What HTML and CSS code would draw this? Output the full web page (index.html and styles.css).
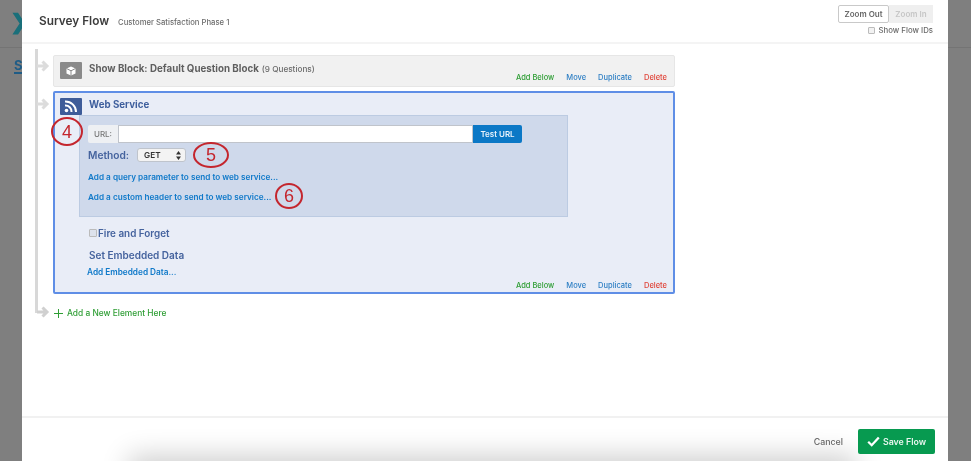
FILE: index.html
```html
<!DOCTYPE html>
<html lang="en">
<head>
<meta charset="utf-8">
<title>Survey Flow</title>
<link rel="stylesheet" href="styles.css">
</head>
<body>
<div class="backdrop">
  <div class="bg-logo">❯</div>
  <div class="bg-tab">S</div>
  <div class="bg-line-left"></div>
  <div class="bg-line-right"></div>
</div>
<main class="dialog">
  <header class="head">
    <div class="title-group">
      <h1 class="title">Survey Flow</h1>
      <span class="subtitle">Customer Satisfaction Phase 1</span>
    </div>
    <div class="zoom-group">
      <div class="zoom-buttons">
        <span class="zoom-btn active">Zoom Out</span>
        <span class="zoom-btn disabled">Zoom In</span>
      </div>
      <label class="flow-ids"><span class="check"></span>Show Flow IDs</label>
    </div>
  </header>
  <section class="canvas">
    <div class="rail"></div>
    <svg class="arrow arrow-1" width="14" height="14" viewBox="0 0 14 14"><path d="M0 7H9M5.500 2.500L10 7L5.500 11.500" fill="none" stroke="#dcdcdc" stroke-width="3"/></svg>
    <svg class="arrow arrow-2" width="14" height="14" viewBox="0 0 14 14"><path d="M0 7H9M5.500 2.500L10 7L5.500 11.500" fill="none" stroke="#dcdcdc" stroke-width="3"/></svg>
    <svg class="arrow arrow-3" width="14" height="14" viewBox="0 0 14 14"><path d="M0 7H9M5.500 2.500L10 7L5.500 11.500" fill="none" stroke="#d0d0d0" stroke-width="3"/></svg>

    <article class="block block-show">
      <div class="block-title">
        <span class="icon icon-gray">
          <svg width="12" height="10" viewBox="0 0 12 10"><path d="M6 0.500L10.500 2.500V7.500L6 9.500L1.500 7.500V2.500Z" fill="#fff"/><path d="M1.500 2.500L6 4.800L10.500 2.500M6 4.800V9.500" fill="none" stroke="#8a8a8a" stroke-width="1"/></svg>
        </span>
        <span class="name-gray">Show Block: Default Question Block</span>
        <span class="count">(9 Questions)</span>
      </div>
      <div class="actions">
        <a class="add">Add Below</a><a class="link">Move</a><a class="link">Duplicate</a><a class="del">Delete</a>
      </div>
    </article>

    <article class="block block-web">
      <div class="block-title web-title">
        <span class="icon icon-blue">
          <svg width="14" height="13" viewBox="0 0 14 13"><circle cx="2.500" cy="10.500" r="1.800" fill="#fff"/><path d="M1 5.500A6 6 0 0 1 7.500 12M1 1.500A10.500 10.500 0 0 1 12 12" fill="none" stroke="#fff" stroke-width="2"/></svg>
        </span>
        <span class="name-blue">Web Service</span>
      </div>
      <div class="panel">
        <div class="url-row">
          <span class="url-label">URL:</span>
          <span class="url-input"></span>
          <span class="test-btn">Test URL</span>
        </div>
        <div class="method-row">
          <span class="method-label">Method:</span>
          <span class="select">GET<svg width="5" height="9" viewBox="0 0 5 9"><path d="M2.500 0L5 3.500H0ZM2.500 9L0 5.500H5Z" fill="#333"/></svg></span>
        </div>
        <a class="panel-link first">Add a query parameter to send to web service...</a>
        <a class="panel-link second">Add a custom header to send to web service...</a>
      </div>
      <div class="fire"><span class="check small"></span>Fire and Forget</div>
      <div class="set-data">Set Embedded Data</div>
      <a class="add-data">Add Embedded Data...</a>
      <div class="actions web-actions">
        <a class="add">Add Below</a><a class="link">Move</a><a class="link">Duplicate</a><a class="del">Delete</a>
      </div>
    </article>

    <a class="new-element">
      <svg width="9" height="9" viewBox="0 0 9 9"><path d="M4.500 0V9M0 4.500H9" stroke="#2f9e35" stroke-width="1"/></svg>
      Add a New Element Here
    </a>

    <span class="note note-4">4</span>
    <span class="note note-5">5</span>
    <span class="note note-6">6</span>
  </section>
  <footer class="foot">
    <div class="foot-shadow"></div>
    <a class="cancel">Cancel</a>
    <span class="save">
      <svg width="13" height="11" viewBox="0 0 13 11"><path d="M1.200 5.800L4.700 9.200L11.800 1.500" fill="none" stroke="#fff" stroke-width="2.300"/></svg>
      Save Flow
    </span>
  </footer>
</main>
</body>
</html>
```
FILE: styles.css
```css
* { box-sizing: border-box; }
html, body { margin: 0; height: 100%; }
body {
  width: 971px;
  height: 461px;
  overflow: hidden;
  position: relative;
  background: #7f7f7f;
  font-family: Inter, "Liberation Sans", sans-serif;
  display: flex;
  justify-content: center;
}
a { cursor: pointer; }

.backdrop { position: absolute; inset: 0; filter: blur(0.7px); }
.bg-logo { position: absolute; left: 10px; top: 9px; color: #1a6f7a; font-size: 21px; font-weight: 700; line-height: 26px; }
.bg-tab { position: absolute; left: 14px; top: 57px; color: #1f5c86; font-size: 13px; font-weight: 700; line-height: 16px; }
.bg-tab::after { content: ""; position: absolute; left: 0; top: 15px; width: 9px; height: 2px; background: #1f5c86; }
.bg-line-left { position: absolute; left: 0; top: 47px; width: 22px; height: 1px; background: #747474; }
.bg-line-right { position: absolute; right: 0; top: 47px; width: 23px; height: 1px; background: #747474; }

.dialog {
  position: relative;
  width: 926px;
  height: 461px;
  margin-left: -1px;
  background: #fff;
  display: flex;
  flex-direction: column;
  filter: blur(0.7px);
}

.head {
  height: 44px;
  flex: none;
  display: flex;
  justify-content: space-between;
  border-bottom: 2px solid #f4f4f4;
  padding: 5px 15px 0 17px;
}
.title-group { display: flex; align-items: baseline; gap: 9px; padding-top: 8px; }
.title { margin: 0; font-size: 11.800px; line-height: 16px; font-weight: 600; color: #3c3c3c; }
.subtitle { font-size: 7.700px; font-weight: 500; color: #6d6d6d; }
.zoom-group { display: flex; flex-direction: column; align-items: flex-end; }
.zoom-buttons { display: flex; }
.zoom-btn { height: 18px; font-size: 8px; line-height: 16px; font-weight: 600; }
.zoom-btn.active { border: 1px solid #c9c9c9; border-radius: 2px; color: #666; width: 51px; text-align: center; }
.zoom-btn.disabled { background: #efefef; color: #c6c6c6; width: 44px; text-align: center; line-height: 18px; }
.flow-ids { display: flex; align-items: center; gap: 4px; font-size: 7.800px; font-weight: 500; color: #6a6a6a; margin-top: 2px; line-height: 10px; }
.check { width: 7px; height: 7px; border: 1px solid #bbb; border-radius: 1px; background: #f2f2f2; display: inline-block; }

.canvas { position: relative; flex: 1; padding: 11px 0 0 31px; }
.rail { position: absolute; left: 13px; top: 5px; width: 3px; height: 264px; background: #d8d8d8; }
.arrow { position: absolute; left: 15px; }
.arrow-1 { top: 15px; }
.arrow-2 { top: 53px; }
.arrow-3 { top: 261px; }

.block { width: 622px; position: relative; }
.block-show {
  height: 32px;
  background: #f1f1f1;
  border: 1px solid #e6e6e6;
  border-radius: 2px;
  padding: 6px 6px 0;
}
.block-web {
  height: 203px;
  margin-top: 4px;
  background: #e9edf7;
  border: 2px solid #5f8ee6;
  border-radius: 2px;
  padding: 5px 5px 0;
}
.block-title { display: flex; align-items: flex-start; gap: 7px; height: 16px; font-size: 9.760px; line-height: 14px; font-weight: 700; }
.icon { width: 22px; height: 17px; flex: none; border-radius: 1px; display: flex; align-items: center; justify-content: center; }
.icon-gray { background: #8a8a8a; }
.icon-blue { background: #3e5c99; }
.name-gray { color: #5f5f5f; }
.name-blue { color: #3f5f9d; }
.count { font-size: 8.200px; font-weight: 500; color: #6b6b6b; margin-left: -4px; }

.actions { position: absolute; right: 7px; bottom: 3px; display: flex; gap: 12px; font-size: 7.500px; font-weight: 500; line-height: 10px; }
.web-actions { right: 6px; bottom: 1px; }
.add { color: #2f9e35; }
.link { color: #2e7fc4; }
.del { color: #e0453a; }

.panel {
  width: 489px;
  height: 102px;
  margin: 1px 0 0 19px;
  background: #cfd9eb;
  border: 1px solid #bccbe2;
  padding: 9px 0 0 8px;
}
.url-row { display: flex; height: 18px; }
.url-label { width: 30px; background: #eef0f3; color: #777; font-size: 8px; font-weight: 500; line-height: 18px; text-align: center; border-radius: 2px 0 0 2px; }
.url-input { width: 355px; background: #fff; border: 1px solid #c0c4cb; }
.test-btn { width: 49px; background: #0b78c6; color: #e8f2fb; font-size: 8px; font-weight: 600; line-height: 18px; text-align: center; border-radius: 0 2px 2px 0; }
.method-row { display: flex; align-items: center; gap: 8px; margin-top: 4px; height: 16px; }
.method-label { font-size: 10.200px; font-weight: 600; color: #45639e; }
.select { width: 49px; height: 14px; background: #f3f3f3; border: 1px solid #bfc4cc; border-radius: 3px; display: flex; align-items: center; justify-content: space-between; padding: 0 4px 0 6px; font-size: 8.200px; font-weight: 600; color: #333; }
.panel-link { display: block; font-size: 8.200px; font-weight: 600; color: #0f79c9; line-height: 10px; }
.panel-link.first { margin-top: 9px; }
.panel-link.second { margin-top: 10px; }

.fire { display: flex; align-items: center; gap: 1px; margin: 10px 0 0 29px; font-size: 9.900px; font-weight: 600; color: #45639e; line-height: 12px; }
.check.small { width: 8px; height: 8px; background: #dde2ec; }
.set-data { margin: 10px 0 0 29px; font-size: 10px; font-weight: 600; color: #45639e; line-height: 12px; }
.add-data { display: block; margin: 6px 0 0 27px; font-size: 8.250px; font-weight: 600; color: #0f79c9; line-height: 10px; }

.new-element { display: flex; align-items: center; gap: 4px; margin: 13px 0 0 1px; font-size: 8.400px; font-weight: 500; color: #2f9e35; line-height: 12px; }

.note {
  position: absolute;
  display: flex;
  align-items: center;
  justify-content: center;
  border: 2px solid #c4262e;
  border-radius: 50%;
  color: #c4262e;
  font-family: "Liberation Sans", sans-serif;
  font-size: 18px;
  line-height: 1;
}
.note-4 { left: 29px; top: 73px; width: 32px; height: 29px; }
.note-5 { left: 171px; top: 98px; width: 36px; height: 26px; }
.note-6 { left: 253px; top: 139px; width: 28px; height: 26px; }

.foot {
  position: relative;
  height: 45px;
  flex: none;
  overflow: hidden;
  border-top: 2px solid #f1f1f1;
  display: flex;
  justify-content: flex-end;
  align-items: center;
  gap: 15px;
  padding: 4px 13px 0 0;
}
.foot-shadow { position: absolute; left: 115px; right: 100px; top: 46px; height: 20px; box-shadow: 0 0 28px 8px rgba(0, 0, 0, 0.2); }
.cancel { position: relative; font-size: 8.800px; font-weight: 500; color: #666; }
.save { position: relative; width: 77px; height: 25px; background: #079a50; border-radius: 2px; color: #e9f6ef; font-size: 8.800px; font-weight: 600; display: flex; align-items: center; justify-content: center; gap: 3px; }
```
